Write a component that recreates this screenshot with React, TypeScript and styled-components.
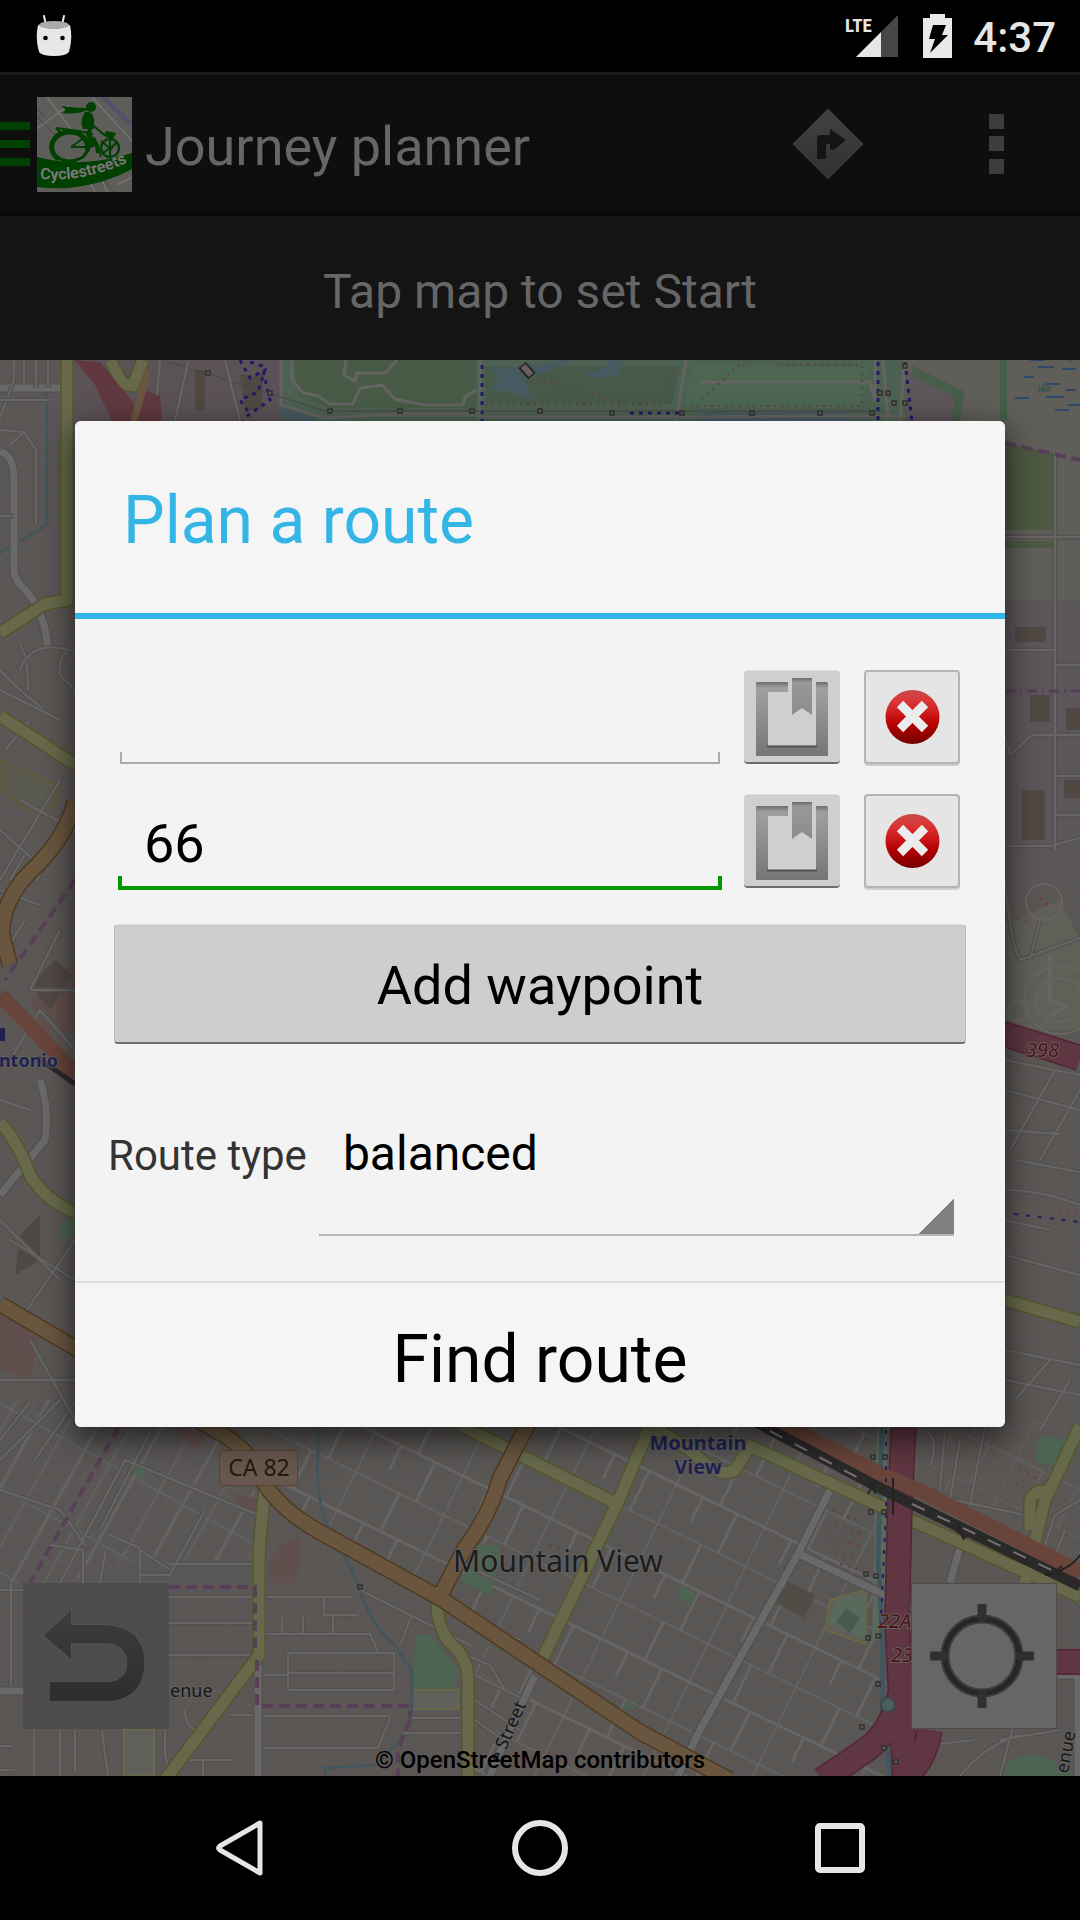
import React, { useState } from "react";
import styled, { createGlobalStyle } from "styled-components";

const GlobalStyle = createGlobalStyle`
  *, *::before, *::after { box-sizing: border-box; }
  body { margin: 0; background: #000; font-family: Roboto, "Noto Sans", sans-serif; }
  button, input, select { font: inherit; color: inherit; border: 0; border-radius: 0; margin: 0; padding: 0; background: none; outline: none; }
  svg { display: block; }
`;

const Screen = styled.div`
  display: flex;
  flex-direction: column;
  min-height: 100vh;
  background: #000;
`;

const StatusBar = styled.header`
  display: flex;
  align-items: center;
  height: 72px;
  padding: 0 24px 0 36px;
  color: #e6e6e6;
`;

const StatusRight = styled.div`
  display: flex;
  align-items: center;
  margin-left: auto;
`;

const BatterySlot = styled.span`
  margin-left: 22px;
`;

const Clock = styled.time`
  margin-left: 21px;
  padding-top: 4px;
  font-size: 42px;
  line-height: 48px;
  font-weight: 500;
`;

const AppWindow = styled.div`
  position: relative;
  display: flex;
  flex: 1;
  flex-direction: column;
`;

const ActionBar = styled.div`
  display: flex;
  align-items: center;
  height: 144px;
  padding-top: 3px;
  border-top: 3px solid #1a1a1a;
  border-bottom: 6px solid #0a0a0a;
  background: #0e0e0e;
  color: #666;
`;

const BarButton = styled.button<{ $width: number }>`
  display: flex;
  align-items: center;
  justify-content: center;
  width: ${(p) => p.$width}px;
  height: 100%;
`;

const MenuButton = styled(BarButton)`
  justify-content: flex-start;
`;

const ScreenTitle = styled.h1`
  flex: 1;
  margin: 0 0 0 13px;
  padding-top: 5px;
  font-size: 54px;
  line-height: 64px;
  font-weight: 400;
`;

const Hint = styled.p`
  display: flex;
  align-items: center;
  justify-content: center;
  height: 144px;
  margin: 0;
  padding-top: 8px;
  background: #141414;
  color: #666;
  font-size: 48px;
  line-height: 56px;
`;

const MapArea = styled.main`
  position: relative;
  display: flex;
  flex: 1;
  flex-direction: column;
  justify-content: flex-end;
  min-height: 1200px;
  overflow: hidden;
  background: #5a5856;
`;

const MapDrawing = styled.svg`
  position: absolute;
  inset: 0;
  width: 100%;
  height: 100%;
`;

const MapControls = styled.div`
  position: relative;
  display: flex;
  justify-content: space-between;
  padding: 0 23px 13px;
`;

const MapButton = styled.button<{ $fill: string }>`
  display: flex;
  align-items: center;
  justify-content: center;
  width: 146px;
  height: 146px;
  padding-right: 5px;
  border: 1px solid #4c4c4c;
  background: ${(p) => p.$fill};
`;

const Attribution = styled.p`
  position: relative;
  height: 34px;
  margin: 0;
  padding-top: 2px;
  color: #000;
  font-size: 24px;
  line-height: 32px;
  font-weight: 500;
  text-align: center;
`;

const DialogLayer = styled.div`
  position: absolute;
  inset: 0;
  display: flex;
  align-items: center;
  padding: 0 75px;
`;

const Dialog = styled.form`
  flex: 1;
  border-radius: 6px;
  overflow: hidden;
  background: #f3f3f3;
  color: #000;
  box-shadow: 0 10px 30px 2px rgba(0, 0, 0, 0.6);
`;

const DialogTitle = styled.h2`
  height: 198px;
  margin: 0;
  padding: 60px 48px 0;
  border-bottom: 6px solid #33b5e5;
  background: #f5f5f5;
  color: #33b5e5;
  font-size: 66px;
  line-height: 80px;
  font-weight: 400;
`;

const DialogBody = styled.div`
  padding: 51px 39px 45px;
`;

const Waypoints = styled.div`
  display: flex;
  flex-direction: column;
  gap: 28px;
  padding: 0 6px 0 4px;
`;

const WaypointRow = styled.div`
  display: flex;
  align-items: center;
  gap: 24px;
`;

const WaypointInput = styled.input<{ $active: boolean }>`
  --ink: ${(p) => (p.$active ? "#009900" : "#ababab")};
  --line: ${(p) => (p.$active ? 4 : 2)}px;
  --inset: ${(p) => (p.$active ? 0 : 2)}px;
  flex: 1;
  min-width: 0;
  height: 96px;
  margin-right: -2px;
  padding: 2px 26px 0;
  font-size: 54px;
  line-height: 64px;
  background:
    linear-gradient(var(--ink), var(--ink)) center bottom var(--inset) / calc(100% - 2 * var(--inset)) var(--line) no-repeat,
    linear-gradient(var(--ink), var(--ink)) left var(--inset) bottom var(--inset) / var(--line) calc(14px - var(--inset)) no-repeat,
    linear-gradient(var(--ink), var(--ink)) right var(--inset) bottom var(--inset) / var(--line) calc(14px - var(--inset)) no-repeat;
`;

const BookmarkButton = styled.button`
  width: 96px;
  height: 94px;
  margin-bottom: 2px;
  border-radius: 4px;
  background: #cfcfcf;
  border-top: 1px solid #dedede;
  border-bottom: 2px solid #6c6c6c;
  display: grid;
  place-items: center;
`;

const RemoveButton = styled.button`
  width: 96px;
  height: 94px;
  margin-bottom: 2px;
  border: 2px solid #b4b4b4;
  border-radius: 4px;
  background: #e5e5e5;
  box-shadow: 0 2px 0 #cdcdcd;
  display: grid;
  place-items: center;
`;

const AddButton = styled.button`
  display: block;
  width: 100%;
  height: 120px;
  margin-top: 34px;
  padding-top: 5px;
  border: 1px solid #bdbdbd;
  border-top-color: #dedede;
  border-bottom: 2px solid #6c6c6c;
  border-radius: 4px;
  background: #cecece;
  font-size: 54px;
  line-height: 64px;
`;

const RouteTypeRow = styled.div`
  display: flex;
  align-items: flex-end;
  margin: 48px 12px 0 -6px;
`;

const RouteTypeLabel = styled.label`
  padding-bottom: 56px;
  color: #333;
  font-size: 42px;
  line-height: 48px;
`;

const RouteTypeSelect = styled.select`
  flex: 1;
  height: 144px;
  margin-left: 12px;
  padding: 0 24px 18px;
  appearance: none;
  border-bottom: 2px solid #b6b6b6;
  background: linear-gradient(135deg, transparent 50%, #808080 50%) right bottom / 36px 36px no-repeat;
  font-size: 48px;
  line-height: 56px;
`;

const FindButton = styled.button`
  display: block;
  width: 100%;
  height: 146px;
  padding-top: 9px;
  border-top: 2px solid #dcdcdc;
  background: #f5f5f5;
  font-size: 66px;
  line-height: 80px;
`;

const NavBar = styled.nav`
  display: flex;
  justify-content: center;
  height: 144px;
`;

const NavButton = styled.button`
  display: grid;
  place-items: center;
  width: 300px;
`;

/* ---------- icons ---------- */

const DebugIcon = () => (
  <svg width="36" height="42" viewBox="0 0 36 42">
    <path d="M8 1l2 9M28 1l-2 9" stroke="#e6e6e6" strokeWidth="2" strokeLinecap="round" />
    <path d="M2 10Q18 17 34 10Q37 24 33 37Q30 41 18 41Q6 41 3 37Q-1 24 2 10z" fill="#e6e6e6" />
    <ellipse cx="18" cy="10" rx="15" ry="4" fill="#ababab" />
    <circle cx="9.500" cy="23" r="2.300" />
    <circle cx="26.500" cy="23" r="2.300" />
  </svg>
);

const SignalIcon = () => (
  <svg width="56" height="44" viewBox="0 0 56 44">
    <path d="M53 1V43H36V18z" fill="#474747" />
    <path d="M36 18V43H11z" fill="#e6e6e6" />
    <text x="0" y="18" fill="#e6e6e6" fontFamily="'Roboto Condensed','Liberation Sans Narrow',Roboto,sans-serif" fontSize="19" fontWeight="700">LTE</text>
  </svg>
);

const BatteryIcon = () => (
  <svg width="29" height="44" viewBox="0 0 29 44">
    <path d="M7 0h15v4h7v40H0V4h7z" fill="#e9e9e9" />
    <path d="M10 11h13l-4 10h6L7 39l5-14H6z" fill="#000" />
  </svg>
);

const MenuIcon = () => (
  <svg width="30" height="44" viewBox="0 0 30 44" fill="#004000">
    <path d="M0 0h30v8H0zM0 18h30v8H0zM0 36h30v8H0z" />
  </svg>
);

const AppLogo = () => (
  <svg width="95" height="95" viewBox="0 0 95 95">
    <rect width="95" height="95" fill="#5d5e59" />
    <path d="M66 0L95 28" stroke="#50526b" strokeWidth="5" />
    <path d="M10 0L40 40M0 32L32 8M55 0L95 44M58 95L52 84M70 95L64 80M80 88l15-8" stroke="#747471" strokeWidth="1.500" fill="none" />
    <path d="M0 20L20 40M0 12l8 8M76 95L66 82M30 92l-10-6" stroke="#484a47" strokeWidth="1" fill="none" />
    <g stroke="#004000" fill="none">
      <path d="M22 62A18 15 0 1 1 50 54" strokeWidth="5" />
      <path d="M20 60Q32 68 46 60L52 52" strokeWidth="3" />
      <circle cx="73" cy="51" r="9" strokeWidth="2.500" />
      <path d="M19 31L42 34L56 37M19 31l5 5Q40 34 50 42M34 50H54L58 42L64 60M34 50L48 40M64 44L74 52L80 44M73 42V60M66 56L80 46" strokeWidth="2" />
      <path d="M57 29l9 8 6 3" strokeWidth="2" />
      <path d="M53 30L52 38L60 48L61 56M50 34L56 50" strokeWidth="4" />
    </g>
    <circle cx="54" cy="10" r="5" fill="#004000" />
    <path d="M48 15q8-2 9 8v9H46q-4-8 2-17zM50 11Q38 11 24 9l5 4-4 3q14 2 26-3zM69 34l10 2-3 6-9-3z" fill="#004000" />
    <path d="M0 60Q45 72 95 56V72Q50 96 0 90z" fill="#004000" />
    <path id="logo-arc" d="M3 82Q46 86 94 64" fill="none" />
    <text fill="#777" fontFamily="Roboto, sans-serif" fontSize="16" fontWeight="700">
      <textPath href="#logo-arc">Cyclestreets</textPath>
    </text>
  </svg>
);

const DirectionsIcon = () => (
  <svg width="72" height="74" viewBox="0 0 72 74">
    <defs>
      <linearGradient id="sign" x1="0" y1="0" x2="0" y2="1">
        <stop offset="0" stopColor="#424242" />
        <stop offset="1" stopColor="#303030" />
      </linearGradient>
    </defs>
    <path d="M36 2L71 37L36 72L1 37z" fill="url(#sign)" stroke="#393939" strokeWidth="1" />
    <path d="M25 52V32Q25 28 29 28H38V22L54 33L42 43L38 42V37H34V52z" fill="#141414" />
  </svg>
);

const OverflowIcon = () => (
  <svg width="15" height="60" viewBox="0 0 15 60" fill="#3d3d3d">
    <path d="M0 0h15v15H0zM0 22h15v15H0zM0 45h15v15H0z" />
  </svg>
);

const BookmarkIcon = () => (
  <svg width="74" height="80" viewBox="0 0 74 80">
    <defs>
      <linearGradient id="frame" x1="0" y1="0" x2="0" y2="1">
        <stop offset="0" stopColor="#6c6c6c" />
        <stop offset="0.080" stopColor="#a0a0a0" />
        <stop offset="1" stopColor="#757575" />
      </linearGradient>
      <linearGradient id="ribbon" x1="0" y1="0" x2="0" y2="1">
        <stop offset="0" stopColor="#6c6c6c" />
        <stop offset="0.120" stopColor="#989898" />
        <stop offset="1" stopColor="#8c8c8c" />
      </linearGradient>
    </defs>
    <path d="M1 6Q1 5 3 5H33V15H13V69H61V5H71Q73 5 73 7V79H1z" fill="url(#frame)" />
    <path d="M12 69.500H62" stroke="#505050" strokeWidth="2" />
    <path d="M37 1H57V38L47 31L37 38z" fill="url(#ribbon)" />
  </svg>
);

const RemoveIcon = () => (
  <svg width="56" height="56" viewBox="0 0 56 56">
    <defs>
      <linearGradient id="ball" x1="0" y1="0" x2="0" y2="1">
        <stop offset="0" stopColor="#c84a4a" />
        <stop offset="0.200" stopColor="#db3636" />
        <stop offset="0.450" stopColor="#cc1818" />
        <stop offset="0.650" stopColor="#b40000" />
        <stop offset="1" stopColor="#740000" />
      </linearGradient>
    </defs>
    <circle cx="28.500" cy="28" r="27" fill="url(#ball)" />
    <path d="M16 15L41 40M41 15L16 40" stroke="#ececec" strokeWidth="9" />
  </svg>
);

const UndoIcon = () => (
  <svg width="106" height="96" viewBox="0 0 104 94">
    <defs>
      <linearGradient id="undo" x1="0" y1="0" x2="0" y2="1">
        <stop offset="0" stopColor="#3d3d3d" />
        <stop offset="1" stopColor="#2d2d2d" />
      </linearGradient>
    </defs>
    <path d="M2 27L30 1V16H66Q102 20 102 53Q102 88 68 92H8V72H66Q84 70 84 54Q84 38 66 35H30V51z" fill="url(#undo)" stroke="#535353" strokeWidth="1" />
  </svg>
);

const LocateIcon = () => (
  <svg width="104" height="104" viewBox="0 0 104 104" fill="none" stroke="#262626">
    <circle cx="52" cy="52" r="37" stroke="#3c3c3c" strokeWidth="9" />
    <circle cx="52" cy="52" r="37" strokeWidth="5" />
    <path d="M52 1V14M52 90V103M1 52H14M90 52H103" stroke="#303030" strokeWidth="9" strokeLinecap="round" />
  </svg>
);

const BackIcon = () => (
  <svg width="50" height="60" viewBox="0 0 50 60" fill="none" stroke="#e6e6e6" strokeWidth="5" strokeLinejoin="round">
    <path d="M45 5V55L5 32Q2 30 5 28z" />
  </svg>
);
const HomeIcon = () => (
  <svg width="60" height="60" viewBox="0 0 60 60" fill="none" stroke="#e6e6e6" strokeWidth="6">
    <circle cx="30" cy="30" r="25" />
  </svg>
);
const RecentIcon = () => (
  <svg width="50" height="50" viewBox="0 0 50 50" fill="none" stroke="#e6e6e6" strokeWidth="6">
    <rect x="3" y="3" width="44" height="44" rx="2" />
  </svg>
);

/* ---------- map ---------- */

type RoadKind = "primary" | "secondary" | "motorway" | "tertiary" | "street";

const roadStyles: Record<RoadKind, { fill: string; casing: string; width: number }> = {
  primary: { fill: "#6a563f", casing: "#4c3b22", width: 14 },
  secondary: { fill: "#67694a", casing: "#53562f", width: 11 },
  motorway: { fill: "#5f3641", casing: "#552536", width: 23 },
  tertiary: { fill: "#696969", casing: "#535251", width: 7 },
  street: { fill: "#676665", casing: "#555352", width: 2 },
};

const roads: Array<[RoadKind, string]> = [
  ["street", "M0 1590H24M0 1691H24M11 1583V1690M150 1432L100 1530M60 1583L125 1460L270 1520M0 1490L60 1510L85 1545M0 1440L30 1402M34 1461L75 1402M0 1460L60 1400M140 1583V1550L170 1570M140 1575H170L205 1510M170 1564H255M83 1583V1550L50 1545M100 1583L106 1550M110 1535L140 1548"],
  ["street", "M169 1597H353M169 1623H255M169 1655H250M264 1634H370L378 1652M288 1653H394V1673M288 1653V1690H394V1655M288 1673H394M264 1675H288M324 1597V1615H358M282 1615V1634M303 1615V1634M333 1616V1634M264 1716H390M264 1748H378L390 1718M403 1733H465M412 1718H465M230 1715H255M169 1691H215M180 1760H234M203 1760V1776M34 1730V1776M60 1730V1776M75 1730V1772M102 1730L108 1776M165 1730V1755L170 1776M0 1746H12M0 1770H14M185 1710Q185 1730 200 1730"],
  ["street", "M475 1675L525 1700M475 1700L520 1730M475 1720L510 1745M470 1657L490 1665L505 1690M360 1590L410 1615L470 1645M400 1645L412 1615M540 1600L475 1570M450 1610L520 1640"],
  ["tertiary", "M258 1655V1776M830 1490L800 1550L700 1730L678 1776M795 1552L912 1608M535 1676L505 1740L490 1776M962 1540L950 1583M0 1691H24M1058 1675H1080M1078 1660V1776"],
  ["tertiary", "M0 452Q14 455 14 480V570Q14 580 25 590Q45 610 48 650M0 388H63M0 1195L45 1140Q50 1110 40 1080"],
  ["street", "M0 418L14 380V360M14 516H0M36 523V450L24 432L0 430M24 432L10 445M0 960L25 920M20 645Q28 655 28 690M0 670L20 690L50 715M30 720L5 750M75 650Q58 650 60 675L75 690M0 890L40 905M10 880L28 850M36 882L56 840"],
  ["street", "M0 690L60 720M20 670Q30 640 70 650M75 830L20 800M0 830L45 870M0 880L60 780M0 1100L30 1110M75 1050L40 1010L10 1060M75 1240L20 1320M75 1280L10 1240M30 1340L75 1420M0 1380L75 1380M75 990H30L60 930M0 1220L60 1280M24 360V385M36 360V388M48 360V388M0 400H50"],
  ["street", "M160 360L155 421M188 362L175 421M225 360L240 421M1005 650H1055M1055 455V850M1005 537H1080M1005 846H1050L1080 838M1005 735L1010 755L1032 735H1080M1055 665H1080M1055 776H1080M1055 815H1080M1005 880Q1010 940 1020 960M1020 960L1080 938M1030 960L1040 920"],
  ["street", "M1005 1060L1080 1075M1055 1070L1010 1150M1080 1090L1040 1160M1005 1090L1080 1110M1005 1130L1060 1134M1015 1160L1080 1172M1005 1190Q1040 1190 1080 1205M1005 1220L1050 1230M1005 1255L1080 1275M1005 1350L1080 1365M1015 1400L1050 1360M1040 1430L1070 1380M1005 1380L1080 1395"],
  ["street", "M925 1430Q940 1440 930 1465M945 1430L940 1490M930 1495L1025 1515M960 1440L950 1500M985 1426L970 1505M1040 1560L1055 1515L1080 1500M1050 1570L1065 1530M1020 1700L1000 1776M960 1776Q985 1745 1020 1735M930 1745L975 1740M1000 1740L1060 1730"],
  ["secondary", "M67 360V600L45 604L0 633M0 716L45 745L75 765M0 1122Q20 1145 30 1175Q45 1200 75 1213M462 1426L617 1504M650 1426L617 1504L540 1664M265 1490Q260 1530 259 1560V1655L165 1780M437 1605Q438 1630 452 1645Q468 1658 468 1680V1780"],
  ["secondary", "M655 1428L690 1450Q720 1480 735 1470L750 1446L880 1506L1080 1597M1080 1426L1045 1500L1025 1583M1030 1530V1500Q1036 1488 1050 1492M1005 1300L1080 1322M110 360L122 383L133 386L143 360"],
  ["primary", "M75 802Q65 840 30 872Q2 900 2 935L10 965M0 1304L75 1348L215 1430Q250 1448 262 1480Q280 1510 320 1532L440 1598L540 1665L640 1732L730 1780M437 1602L465 1548Q490 1515 500 1478L530 1420"],
  ["motorway", "M904 1420L900 1500L897 1620L905 1780M903 1680Q895 1730 866 1750L822 1780M906 1776Q925 1760 930 1730M1057 1662H1080M985 1028L1080 1058"],
];

const Road = ({ kind, d }: { kind: RoadKind; d: string }) => {
  const s = roadStyles[kind];
  return (
    <g fill="none" strokeLinejoin="round">
      <path d={d} stroke={s.casing} strokeWidth={s.width + 3} />
      <path d={d} stroke={s.fill} strokeWidth={s.width} />
    </g>
  );
};

const Pylons = ({ points }: { points: number[][] }) => (
  <g fill="#5e5e5a" stroke="#30302d" strokeWidth="1.500">
    {points.map(([x, y]) => (
      <rect key={`${x}-${y}`} x={x - 2} y={y - 2} width="4" height="4" />
    ))}
  </g>
);

const StreetMap = () => (
  <MapDrawing viewBox="0 360 1080 1416" preserveAspectRatio="xMidYMid slice" aria-hidden="true">
    <defs>
      <pattern id="houses" width="14" height="11" patternUnits="userSpaceOnUse">
        <path d="M1 2h4v3H1zM8 2h5v3H8zM3 8h4v2H3zM10 8h3v2h-3z" fill="#60524e" opacity="0.600" />
      </pattern>
      <pattern id="grid" width="98" height="86" patternUnits="userSpaceOnUse" patternTransform="rotate(26 540 1430)">
        <path d="M5 5h4v3h-4zM12 6h5v3h-5zM20 5h4v3h-4zM36 5h6v3h-6zM6 35h5v3h-5zM14 34h4v4h-4zM22 35h6v3h-6zM36 35h6v3h-6zM54 5h5v3h-5zM62 6h4v3h-4zM72 5h4v3h-4zM82 6h6v3h-6zM91 5h3v4h-3zM54 35h6v3h-6zM74 35h5v3h-5zM84 34h4v4h-4zM10 15h4v3h-4zM20 20h5v3h-5zM36 24h5v3h-5zM56 18h6v3h-6zM74 24h5v3h-5zM86 18h5v3h-5z" fill="#63534e" opacity="0.700" />
        <path d="M5 49h5v3h-5zM14 48h6v3h-6zM22 55h5v3h-5zM34 49h6v3h-6zM42 50h5v3h-5zM54 49h5v3h-5zM73 49h5v3h-5zM84 50h6v3h-6zM6 78h5v3h-5zM15 77h5v3h-5zM34 78h6v3h-6zM44 76h5v3h-5zM56 77h5v3h-5zM74 78h5v3h-5zM86 77h5v3h-5zM10 64h4v4h-4zM20 66h4v4h-4zM38 62h5v3h-5zM54 63h5v4h-5zM75 62h4v5h-4zM86 66h5v3h-5z" fill="#63534e" opacity="0.700" />
        <path d="M0 0H98M0 43H98M0 0V86M49 0V43M68 43V86M30 43V70" stroke="#686766" strokeWidth="2.500" fill="none" />
      </pattern>
      <pattern id="grid-left" width="56" height="74" patternUnits="userSpaceOnUse" patternTransform="rotate(29 0 1430)">
        <path d="M6 6h4v6H6zM6 16h4v5H6zM6 26h4v6H6zM6 38h4v6H6zM6 48h4v4H6zM6 60h4v6H6zM20 8h4v6h-4zM20 18h4v5h-4zM20 30h4v6h-4zM20 42h4v5h-4zM20 56h4v6h-4zM33 6h4v6h-4zM33 17h4v6h-4zM33 30h4v6h-4zM33 42h4v6h-4zM33 56h4v6h-4zM48 8h4v6h-4zM48 20h4v5h-4zM48 34h4v6h-4zM48 46h4v5h-4zM48 60h4v6h-4z" fill="#60524e" opacity="0.700" />
        <path d="M0 0V74M28 0V74M0 0H56" stroke="#666564" strokeWidth="2.500" />
      </pattern>
    </defs>

    <rect y="360" width="1080" height="1416" fill="#5a5856" />
    <rect y="360" width="1080" height="1416" fill="url(#houses)" />
    <path d="M0 1400H255V1583H0z" fill="#595857" />
    <path d="M0 1400H210L255 1448V1560H140L60 1583H0z" fill="url(#grid-left)" />
    <path d="M270 1420H890V1776H730L540 1660L264 1500z" fill="#595755" />
    <path d="M270 1420H890V1776H730L540 1660L264 1500z" fill="url(#grid)" />
    <path d="M475 1640L540 1668L720 1776H475z" fill="url(#grid)" />
    <path d="M925 1420H1080V1560L925 1480z" fill="url(#grid)" opacity="0.500" />

    {/* commercial and industrial land */}
    <path d="M74 360H280V421H74zM910 360H960V421H910z" fill="#5a5256" />
    <path d="M1005 605H1080V880L1005 900z" fill="#5c5559" />
    <path d="M1057 455H1080V600H1057zM50 370H63V440H50zM50 530H63V600H50z" fill="#5c5559" />
    <path d="M30 1000L75 960V1030L45 1035zM0 1310L40 1330L30 1380L0 1370zM235 1492L258 1500V1510H235zM280 1545L300 1538V1558L295 1583H270L268 1565zM170 1428L210 1430L200 1450z" fill="#614f4d" />
    <path d="M1015 627H1046V642H1015zM1030 695H1050V722H1030zM1022 790H1045V840H1022zM1066 708H1080V730H1066zM1064 780H1080V798H1064zM20 1235L40 1215V1260L15 1275zM30 985L55 960L72 975L50 1010zM240 375H262V410H245zM195 370H205V410H195z" fill="#504843" />

    {/* parks and marsh */}
    <path d="M280 360H905V421H310L280 400z" fill="#4d6152" />
    <path d="M292 360H476V408H330L300 395z" fill="#475b46" />
    <path d="M484 366H680L672 404H486z" fill="#475a49" />
    <path d="M692 366H868L862 408H684z" fill="#4d6652" />
    <path d="M490 368L512 367L545 364L562 360H572L552 370L525 378L532 399L510 392L492 390L500 376zM587 376L602 378L618 376L623 360H606L608 367L587 372zM280 408L300 412L320 421H284zM700 412H850V421H700z" fill="#475a62" />
    <path d="M522 365L532 376" stroke="#242422" strokeWidth="10" />
    <path d="M523 366L531 375" stroke="#67615d" strokeWidth="6" />
    <path d="M905 360H1080V600H1005V421H905z" fill="#5f5e59" />
    <path d="M910 372L956 394L953 421H905V372z" fill="#5c5559" />
    <path d="M1000 360h7V421h-7zM912 366L965 392L960 421H952L955 396L912 376z" fill="#475c49" />
    <path d="M1005 443L1053 453V530H1005zM1005 541H1053V548H1005z" fill="#4d5941" />
    <path d="M415 1636L430 1634L459 1670L452 1692H413zM130 1458L148 1468L142 1480L132 1470zM130 1755H150V1776H130zM478 1545L500 1545V1560L490 1596L460 1580zM1040 1436L1072 1440L1060 1470L1034 1460zM680 1585L695 1592L690 1604L678 1598zM630 1700L635 1710L622 1708zM1005 1765Q1030 1745 1060 1765L1080 1776H1005zM60 1225L75 1215V1235L62 1240z" fill="#4d6453" />
    <path d="M0 760L60 785L56 806L30 812L0 790z" fill="#5b5a4e" stroke="#5d5b3b" strokeWidth="2" />
    <path d="M830 1600L866 1590V1644L825 1630zM413 1690H458V1709H413zM124 1730H154V1776H124z" fill="#60605a" stroke="#6a6845" strokeWidth="2" />
    <path d="M835 1600L866 1592V1640L828 1622zM877 1426H887V1640H872z" fill="#596a5c" />
    <path d="M846 1608L860 1618L850 1633L836 1622z" fill="#465c53" />
    <path d="M1005 925L1060 900L1080 940V1030L1005 1030z" fill="#605f58" />
    <path d="M785 1580L815 1595L805 1618L775 1602z" fill="#504b44" />

    <g fill="none" stroke="#656462" strokeWidth="3">
      <path d="M292 360V380L303 393L318 396L330 404H353L360 388L382 385L395 399L425 405H463L465 397L476 390M346 360L344 375L355 381L357 373H385L397 360M281 360V405L325 418L400 414H470L480 417H700L800 416H905M480 360V421M686 360L676 421M700 382H870L875 400V360" />
      <path d="M883 360L888 421M905 360L900 421" />
    </g>
    <g fill="none" stroke="#5c4438" strokeWidth="2" strokeDasharray="2 5">
      <path d="M485 405H665L675 365M530 382H550L620 402M690 406H862V365H780M745 360L700 400" />
    </g>
    <path d="M240 360L250 378L265 370L258 392L240 400L250 414M250 362L262 366L270 400L240 421M482 365V421M878 362V421M905 362L912 421M630 413H680" fill="none" stroke="#1f1c62" strokeWidth="3" strokeDasharray="4 5" />
    <path d="M170 362L325 411H880" fill="none" stroke="#484844" strokeWidth="1" />
    <Pylons points={[[208, 373], [270, 393], [330, 411], [400, 411], [472, 411], [540, 411], [612, 413], [682, 413], [752, 413], [820, 413], [872, 413], [880, 393], [888, 393], [905, 366], [905, 403], [894, 403]]} />
    <path d="M1038 367h16M1024 377h10M1046 384h14M1062 369h14M1015 398h14M1046 397h18M1068 405h12M1055 410h14M1030 360h14M1066 390h10" stroke="#2c4a68" strokeWidth="2" />
    <path d="M1038 392l1-8 2 5 3-9 2 9 4-7v10zM1066 362l4-6 2 6" fill="#44594e" />

    <g fill="none" stroke="#44565d" strokeWidth="3">
      <path d="M47 360V525L0 553M320 1426Q312 1500 330 1530Q350 1565 358 1585Q370 1625 395 1645L412 1672V1715L400 1740L375 1765L325 1768V1776" />
      <path d="M882 1426L878 1560Q884 1640 882 1700L890 1776" strokeWidth="5" />
    </g>

    {roads.map(([kind, d]) => (
      <Road key={d} kind={kind} d={d} />
    ))}
    <path d="M75 360L100 362L125 392L148 421H112L95 385z" fill="#613840" />
    <path d="M145 390L160 396L162 421H138z" fill="#613840" />
    <path d="M148 370L134 421" stroke="#6a563f" strokeWidth="7" />

    {/* railway */}
    <g fill="none">
      <path d="M0 995L30 1026L75 1074M770 1418L880 1474L925 1493L1080 1572" stroke="#69443a" strokeWidth="15" />
      <path d="M38 1058L75 1084" stroke="#2b2828" strokeWidth="5" />
      <path d="M752 1420L880 1488L1080 1586" stroke="#2b2828" strokeWidth="11" />
      <path d="M770 1431L868 1483M912 1504L1060 1574" stroke="#777270" strokeWidth="2" strokeDasharray="14 14" />
      <path d="M893 1478V1515M1045 1575Q1070 1570 1080 1555" stroke="#222" strokeWidth="2" />
    </g>
    <path d="M955 1530l12 8M958 1526l6 14M1050 1566l12 10M1062 1566l-12 10M868 1480l8 14M876 1480l-8 14" stroke="#262424" strokeWidth="2" />
    <path d="M1005 443L1080 460M118 1428L30 1583M169 1587H255V1650M257 1660V1706H410V1718M75 880L5 980M410 1720L398 1750V1776" fill="none" stroke="#573f57" strokeWidth="4" strokeDasharray="11 6" />
    <path d="M1005 691H1080" stroke="#573f57" strokeWidth="3" strokeDasharray="10 5 2 5" />
    <path d="M886 1430V1510L880 1640M1014 1214L1080 1222" fill="none" stroke="#242060" strokeWidth="2" strokeDasharray="4 8" />
    <g fill="none" stroke="#666563" strokeWidth="2">
      <circle cx="1044" cy="902" r="18" />
      <ellipse cx="1060" cy="1000" rx="36" ry="34" />
      <ellipse cx="1060" cy="1000" rx="24" ry="22" />
      <circle cx="1018" cy="1010" r="10" />
      <path d="M1050 955V1000L1066 1006L1050 1016" strokeWidth="4" />
    </g>
    <path d="M1036 904h16M1040 898l10 8M1018 918l14 4M832 1510l30 12M828 1522l34 12M826 1536l36 10M836 1552l24 8M840 1564l22 6M1020 1470l20 10M1015 1484l20 6M1060 1210h20M550 1545l22 6" stroke="#713a38" strokeWidth="2" strokeDasharray="2 6" />
    <Pylons points={[[873, 1457], [885, 1457], [871, 1512], [884, 1512], [866, 1574], [876, 1576], [868, 1638], [878, 1636], [878, 1684], [862, 1727], [884, 1748], [896, 1762], [360, 1587]]} />
    <circle cx="888" cy="1705" r="7" fill="#4b5f62" stroke="#444" strokeWidth="2" />

    {/* labels */}
    <g fontFamily="'Noto Sans', sans-serif" stroke="#626160" strokeWidth="2" paintOrder="stroke">
      <rect x="220" y="1451" width="77" height="34" rx="4" fill="#67574e" stroke="#59432f" strokeWidth="2" />
      <text x="259" y="1476" textAnchor="middle" fontSize="23" fill="#25190c" stroke="none">CA 82</text>
      <text x="558" y="1572" textAnchor="middle" fontSize="30" fill="#1c1c1c">Mountain View</text>
      <g fontSize="20" fontWeight="700" fill="#212150" textAnchor="middle">
        <text x="698" y="1450">Mountain</text>
        <text x="698" y="1474">View</text>
      </g>
      <text x="58" y="1067" textAnchor="end" fontSize="18" fontWeight="700" fill="#212150">ntonio</text>
      <path d="M0 1028h5v13H0z" fill="#212150" stroke="none" />
      <g fontStyle="italic" fontSize="20" fill="#521015">
        <text x="1026" y="1057">398</text>
        <text x="878" y="1628">22A</text>
        <text x="891" y="1662">23</text>
      </g>
      <g fontSize="18" fill="#161616">
        <text x="170" y="1697">enue</text>
        <text transform="translate(500 1764) rotate(-66)">e Street</text>
        <text transform="translate(1068 1774) rotate(-80)">enue</text>
      </g>
    </g>
  </MapDrawing>
);

/* ---------- screen ---------- */

export default function App() {
  const [waypoints, setWaypoints] = useState(["", "66"]);
  const [active, setActive] = useState(1);
  const [routeType, setRouteType] = useState("balanced");

  const updateWaypoint = (index: number, value: string) =>
    setWaypoints(waypoints.map((w, i) => (i === index ? value : w)));

  return (
    <Screen>
      <GlobalStyle />
      <StatusBar>
        <DebugIcon />
        <StatusRight>
          <SignalIcon />
          <BatterySlot>
            <BatteryIcon />
          </BatterySlot>
          <Clock>4:37</Clock>
        </StatusRight>
      </StatusBar>

      <AppWindow>
        <ActionBar>
          <MenuButton $width={37} aria-label="Menu">
            <MenuIcon />
          </MenuButton>
          <AppLogo />
          <ScreenTitle>Journey planner</ScreenTitle>
          <BarButton $width={168} aria-label="Directions">
            <DirectionsIcon />
          </BarButton>
          <BarButton $width={168} aria-label="More options">
            <OverflowIcon />
          </BarButton>
        </ActionBar>
        <Hint>Tap map to set Start</Hint>
        <MapArea>
          <StreetMap />
          <MapControls>
            <MapButton $fill="#4c4c4c" aria-label="Undo">
              <UndoIcon />
            </MapButton>
            <MapButton $fill="#666" aria-label="My location">
              <LocateIcon />
            </MapButton>
          </MapControls>
          <Attribution>© OpenStreetMap contributors</Attribution>
        </MapArea>

        <DialogLayer>
          <Dialog aria-labelledby="dialog-title" onSubmit={(e) => e.preventDefault()}>
            <DialogTitle id="dialog-title">Plan a route</DialogTitle>
            <DialogBody>
              <Waypoints>
                {waypoints.map((value, i) => (
                  <WaypointRow key={i}>
                    <WaypointInput
                      type="text"
                      aria-label={`Waypoint ${i + 1}`}
                      value={value}
                      $active={active === i}
                      onFocus={() => setActive(i)}
                      onChange={(e) => updateWaypoint(i, e.target.value)}
                    />
                    <BookmarkButton type="button" aria-label="Choose saved place">
                      <BookmarkIcon />
                    </BookmarkButton>
                    <RemoveButton
                      type="button"
                      aria-label="Remove waypoint"
                      onClick={() => setWaypoints(waypoints.filter((_, n) => n !== i))}
                    >
                      <RemoveIcon />
                    </RemoveButton>
                  </WaypointRow>
                ))}
              </Waypoints>
              <AddButton type="button" onClick={() => setWaypoints([...waypoints, ""])}>
                Add waypoint
              </AddButton>
              <RouteTypeRow>
                <RouteTypeLabel htmlFor="route-type">Route type</RouteTypeLabel>
                <RouteTypeSelect id="route-type" value={routeType} onChange={(e) => setRouteType(e.target.value)}>
                  <option value="balanced">balanced</option>
                  <option value="fastest">fastest</option>
                  <option value="quietest">quietest</option>
                </RouteTypeSelect>
              </RouteTypeRow>
            </DialogBody>
            <FindButton type="submit">Find route</FindButton>
          </Dialog>
        </DialogLayer>
      </AppWindow>

      <NavBar>
        <NavButton aria-label="Back">
          <BackIcon />
        </NavButton>
        <NavButton aria-label="Home">
          <HomeIcon />
        </NavButton>
        <NavButton aria-label="Recent apps">
          <RecentIcon />
        </NavButton>
      </NavBar>
    </Screen>
  );
}
